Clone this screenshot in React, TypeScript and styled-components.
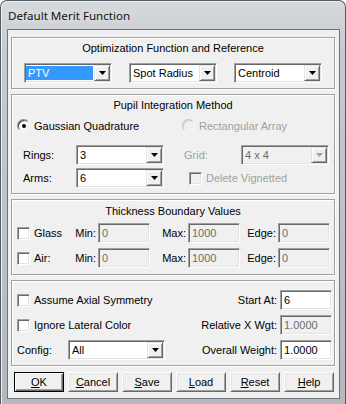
import styled, { createGlobalStyle } from "styled-components"

const GlobalStyle = createGlobalStyle`
    html, body {
        margin: 0;
        padding: 0;
        background: #ffffff;
    }
`

const Window = styled.div`
    width: 346px;
    height: 404px;
    box-sizing: border-box;
    border: 1px solid #555b61;
    border-bottom: none;
    border-radius: 7px 7px 0 0;
    background: linear-gradient(180deg, #d7dadd 0%, #c6cbcf 12%, #bcc1c5 60%, #b4b8bb 100%);
    box-shadow: inset 1px 1px 0 #eef0f2;
    display: flex;
    flex-direction: column;
    font-family: "Liberation Sans", Arial, sans-serif;
    font-size: 11px;
    color: #000;
    overflow: hidden;
`

const TitleBar = styled.div`
    height: 28px;
    flex: none;
    display: flex;
    align-items: center;
    padding-left: 7px;
    font-family: "Noto Sans", "Liberation Sans", sans-serif;
    font-size: 11.6px;
    color: #101010;
    text-shadow: 0 0 6px rgba(255, 255, 255, 0.9);
`

const Client = styled.div`
    flex: 1;
    margin: 0 5px 5px 6px;
    background: #f0f0f0;
    border: 1px solid #6f7479;
    padding: 7px 4px 0 3px;
    display: flex;
    flex-direction: column;
    gap: 5px;
`

const Group = styled.div<{ $h: number; $pt: number; $gap: number }>`
    height: ${p => p.$h}px;
    box-sizing: border-box;
    flex: none;
    border: 1px solid #a0a0a0;
    box-shadow: inset 1px 1px 0 #ffffff, 1px 1px 0 #ffffff;
    padding: ${p => p.$pt}px 0 0 5px;
    display: flex;
    flex-direction: column;
    gap: ${p => p.$gap}px;
`

const GroupTitle = styled.div`
    text-align: center;
    line-height: 13px;
    height: 13px;
    margin-left: -5px;
`

const ComboRow = styled.div`
    display: flex;
    justify-content: space-between;
    padding: 0 12px 0 7px;
`

const Combo = styled.div<{ $w: number; $disabled?: boolean }>`
    width: ${p => p.$w}px;
    height: 20px;
    box-sizing: border-box;
    flex: none;
    display: flex;
    padding: 1px;
    background: ${p => (p.$disabled ? "#f0f0f0" : "#ffffff")};
    border: 1px solid;
    border-color: #a0a0a0 #ffffff #ffffff #a0a0a0;
    box-shadow: inset 1px 1px 0 #696969, inset -1px -1px 0 #e3e3e3;
`

const ComboValue = styled.div<{ $selected?: boolean; $disabled?: boolean }>`
    flex: 1;
    display: flex;
    align-items: center;
    margin: 1px 1px 1px 0;
    padding-left: 2px;
    background: ${p => (p.$selected ? "#3399ff" : "transparent")};
    color: ${p => (p.$selected ? "#ffffff" : p.$disabled ? "#6d6d6d" : "#000000")};
`

const DropButton = styled.div`
    width: 16px;
    height: 16px;
    box-sizing: border-box;
    flex: none;
    background: #f0f0f0;
    border: 1px solid;
    border-color: #e3e3e3 #696969 #696969 #e3e3e3;
    box-shadow: inset 1px 1px 0 #ffffff, inset -1px -1px 0 #a0a0a0;
    display: flex;
    align-items: center;
    justify-content: center;
`

const Edit = styled.div<{ $w: number; $disabled?: boolean }>`
    width: ${p => p.$w}px;
    height: 20px;
    box-sizing: border-box;
    flex: none;
    display: flex;
    align-items: center;
    padding-left: 3px;
    background: ${p => (p.$disabled ? "#f0f0f0" : "#ffffff")};
    color: ${p => (p.$disabled ? "#6d6d6d" : "#000000")};
    border: 1px solid;
    border-color: #a0a0a0 #ffffff #ffffff #a0a0a0;
    box-shadow: inset 1px 1px 0 #696969, inset -1px -1px 0 #e3e3e3;
`

const TwoCols = styled.div`
    display: grid;
    grid-template-columns: 165px 1fr;
    align-items: center;
`

const RadioRow = styled(TwoCols)`
    height: 27px;
    align-items: start;
    padding-top: 4px;
    box-sizing: border-box;
`

const Cell = styled.div<{ $pl?: number }>`
    display: flex;
    align-items: center;
    padding-left: ${p => p.$pl ?? 0}px;
`

const Label = styled.span<{ $w?: number; $disabled?: boolean }>`
    width: ${p => (p.$w ? `${p.$w}px` : "auto")};
    flex: none;
    color: ${p => (p.$disabled ? "#a0a0a0" : "#000000")};
    white-space: nowrap;
`

const RadioCircle = styled.span<{ $disabled?: boolean }>`
    width: 13px;
    height: 13px;
    box-sizing: border-box;
    flex: none;
    border-radius: 50%;
    border: 1px solid;
    border-color: ${p => (p.$disabled ? "#c4c4c4 #f4f4f4 #f4f4f4 #c4c4c4" : "#8a8a8a #ffffff #ffffff #8a8a8a")};
    box-shadow: ${p => (p.$disabled ? "inset 1px 1px 0 #d6d6d6" : "inset 1px 1px 0 #404040, inset -1px -1px 0 #e3e3e3")};
    background: ${p => (p.$disabled ? "#f0f0f0" : "#ffffff")};
    margin-right: 4px;
    display: flex;
    align-items: center;
    justify-content: center;
`

const RadioDot = styled.span`
    width: 4px;
    height: 4px;
    border-radius: 50%;
    background: #000;
`

const CheckBox = styled.span<{ $disabled?: boolean }>`
    width: 13px;
    height: 13px;
    box-sizing: border-box;
    flex: none;
    border: 1px solid;
    border-color: #a0a0a0 #ffffff #ffffff #a0a0a0;
    box-shadow: inset 1px 1px 0 #696969, inset -1px -1px 0 #e3e3e3;
    background: ${p => (p.$disabled ? "#f0f0f0" : "#ffffff")};
    margin-right: 4px;
`

const ThicknessRow = styled.div`
    display: grid;
    grid-template-columns: 60px 73px 90px 90px;
    align-items: center;
`

const Field = styled.div`
    display: flex;
    align-items: center;
    justify-content: flex-end;
    gap: 2px;
`

const OptionRow = styled.div`
    display: flex;
    align-items: center;
    justify-content: space-between;
    height: 20px;
    padding-right: 2px;
`

const RightField = styled.div`
    display: flex;
    align-items: center;
    gap: 3px;
`

const ButtonRow = styled.div`
    display: flex;
    gap: 4px;
    padding: 1px 0 0 3px;
`

const Button = styled.button<{ $default?: boolean }>`
    width: 50px;
    height: 20px;
    box-sizing: border-box;
    padding: 0;
    font-family: "Liberation Sans", Arial, sans-serif;
    font-size: 11px;
    color: #000;
    background: #f0f0f0;
    border: 1px solid;
    border-color: ${p => (p.$default ? "#000000" : "#ffffff #696969 #696969 #ffffff")};
    box-shadow: ${p =>
        p.$default
            ? "inset 1px 1px 0 #ffffff, inset -1px -1px 0 #696969, inset -2px -2px 0 #a0a0a0"
            : "inset 1px 1px 0 #e3e3e3, inset -1px -1px 0 #a0a0a0"};
`

const Key = styled.span`
    text-decoration: underline;
    text-underline-offset: 1px;
`

const Arrow = ({ disabled }: { disabled?: boolean }) => (
    <svg width="7" height="4" viewBox="0 0 7 4">
        <polygon points="0,0 7,0 3.5,4" fill={disabled ? "#a0a0a0" : "#000"} />
    </svg>
)

const Dropdown = ({ w, value, selected, disabled }: { w: number; value: string; selected?: boolean; disabled?: boolean }) => (
    <Combo $w={w} $disabled={disabled}>
        <ComboValue $selected={selected} $disabled={disabled}>{value}</ComboValue>
        <DropButton><Arrow disabled={disabled} /></DropButton>
    </Combo>
)

const App = () => {
    return (
        <>
            <GlobalStyle />
            <Window>
                <TitleBar>Default Merit Function</TitleBar>
                <Client>
                    <Group $h={52} $pt={4} $gap={8}>
                        <GroupTitle>Optimization Function and Reference</GroupTitle>
                        <ComboRow>
                            <Dropdown w={88} value="PTV" selected />
                            <Dropdown w={88} value="Spot Radius" />
                            <Dropdown w={88} value="Centroid" />
                        </ComboRow>
                    </Group>

                    <Group $h={100} $pt={4} $gap={3}>
                        <GroupTitle>Pupil Integration Method</GroupTitle>
                        <RadioRow>
                            <Cell><RadioCircle><RadioDot /></RadioCircle><Label>Gaussian Quadrature</Label></Cell>
                            <Cell><RadioCircle $disabled /><Label $disabled>Rectangular Array</Label></Cell>
                        </RadioRow>
                        <TwoCols>
                            <Cell $pl={6}><Label $w={53}>Rings:</Label><Dropdown w={88} value="3" /></Cell>
                            <Cell $pl={2}><Label $w={57} $disabled>Grid:</Label><Dropdown w={88} value="4 x 4" disabled /></Cell>
                        </TwoCols>
                        <TwoCols>
                            <Cell $pl={6}><Label $w={53}>Arms:</Label><Dropdown w={88} value="6" /></Cell>
                            <Cell $pl={7}><CheckBox $disabled /><Label $disabled>Delete Vignetted</Label></Cell>
                        </TwoCols>
                    </Group>

                    <Group $h={76} $pt={5} $gap={5}>
                        <GroupTitle>Thickness Boundary Values</GroupTitle>
                        <ThicknessRow>
                            <Cell><CheckBox /><Label>Glass</Label></Cell>
                            <Field><Label>Min:</Label><Edit $w={52} $disabled>0</Edit></Field>
                            <Field><Label>Max:</Label><Edit $w={52} $disabled>1000</Edit></Field>
                            <Field><Label>Edge:</Label><Edit $w={52} $disabled>0</Edit></Field>
                        </ThicknessRow>
                        <ThicknessRow>
                            <Cell><CheckBox /><Label>Air:</Label></Cell>
                            <Field><Label>Min:</Label><Edit $w={52} $disabled>0</Edit></Field>
                            <Field><Label>Max:</Label><Edit $w={52} $disabled>1000</Edit></Field>
                            <Field><Label>Edge:</Label><Edit $w={52} $disabled>0</Edit></Field>
                        </ThicknessRow>
                    </Group>

                    <Group $h={86} $pt={9} $gap={5}>
                        <OptionRow>
                            <Cell><CheckBox /><Label>Assume Axial Symmetry</Label></Cell>
                            <RightField><Label>Start At:</Label><Edit $w={52}>6</Edit></RightField>
                        </OptionRow>
                        <OptionRow>
                            <Cell><CheckBox /><Label>Ignore Lateral Color</Label></Cell>
                            <RightField><Label>Relative X Wgt:</Label><Edit $w={52} $disabled>1.0000</Edit></RightField>
                        </OptionRow>
                        <OptionRow>
                            <Cell><Label $w={51}>Config:</Label><Dropdown w={97} value="All" /></Cell>
                            <RightField><Label>Overall Weight:</Label><Edit $w={52}>1.0000</Edit></RightField>
                        </OptionRow>
                    </Group>

                    <ButtonRow>
                        <Button $default><Key>O</Key>K</Button>
                        <Button><Key>C</Key>ancel</Button>
                        <Button><Key>S</Key>ave</Button>
                        <Button><Key>L</Key>oad</Button>
                        <Button><Key>R</Key>eset</Button>
                        <Button><Key>H</Key>elp</Button>
                    </ButtonRow>
                </Client>
            </Window>
        </>
    )
}

export default App
